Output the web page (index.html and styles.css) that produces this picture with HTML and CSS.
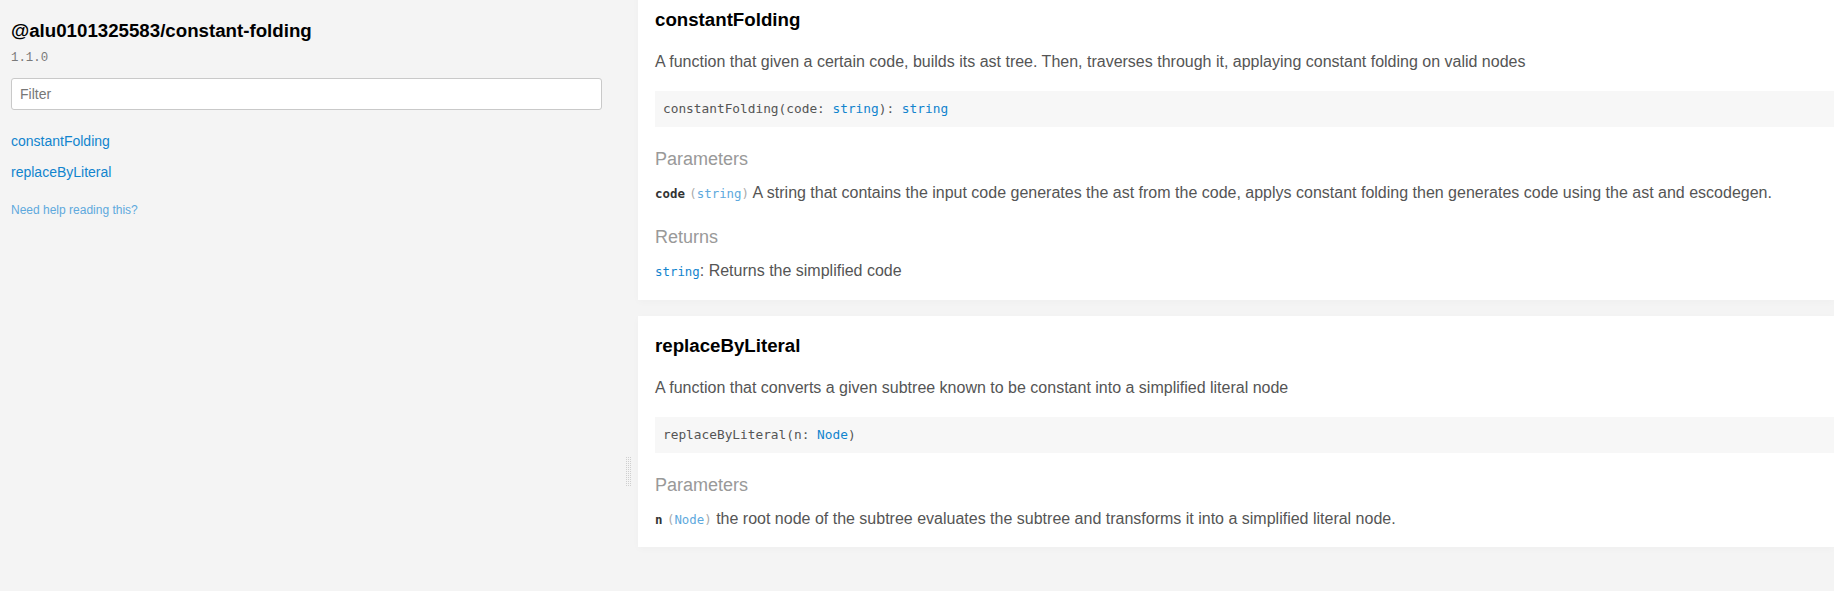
FILE: index.html
```html
<!DOCTYPE html>
<html lang="en">
<head>
<meta charset="utf-8">
<title>@alu0101325583/constant-folding 1.1.0 | Documentation</title>
<link rel="stylesheet" href="styles.css">
</head>
<body>
<div class="layout">
  <aside class="sidebar">
    <h3 class="pkg-title">@alu0101325583/constant-folding</h3>
    <div class="version">1.1.0</div>
    <input class="filter" type="text" placeholder="Filter">
    <ul class="toc">
      <li><a href="#constantfolding">constantFolding</a></li>
      <li><a href="#replacebyliteral">replaceByLiteral</a></li>
    </ul>
    <div class="help"><a href="#">Need help reading this?</a></div>
  </aside>
  <div class="gutter"><span class="grip"></span></div>
  <main class="content">
    <section class="card card-first" id="constantfolding">
      <h3 class="fn-title">constantFolding</h3>
      <p class="desc">A function that given a certain code, builds its ast tree. Then, traverses through it, applaying constant folding on valid nodes</p>
      <div class="sig">constantFolding(code: <a href="#">string</a>): <a href="#">string</a></div>
      <div class="section-label">Parameters</div>
      <div class="param"><span class="pname">code</span> <code class="ptype">(<a href="#">string</a>)</code> A string that contains the input code generates the ast from the code, applys constant folding then generates code using the ast and escodegen.</div>
      <div class="section-label">Returns</div>
      <div class="returns"><code class="rtype"><a href="#">string</a></code>: Returns the simplified code</div>
    </section>
    <section class="card" id="replacebyliteral">
      <h3 class="fn-title">replaceByLiteral</h3>
      <p class="desc">A function that converts a given subtree known to be constant into a simplified literal node</p>
      <div class="sig">replaceByLiteral(n: <a href="#">Node</a>)</div>
      <div class="section-label">Parameters</div>
      <div class="param"><span class="pname">n</span> <code class="ptype">(<a href="#">Node</a>)</code> the root node of the subtree evaluates the subtree and transforms it into a simplified literal node.</div>
    </section>
  </main>
</div>
</body>
</html>
```

FILE: styles.css
```css
html, body {
  margin: 0;
  padding: 0;
  height: 100%;
}
body {
  background: #f4f4f4;
  font-family: "Liberation Sans", Arial, Helvetica, sans-serif;
  color: #555;
  overflow: hidden;
}
.layout {
  display: flex;
  height: 591px;
}
.sidebar {
  width: 623px;
  flex: none;
  box-sizing: border-box;
  padding: 19px 21px 0 11px;
}
.pkg-title {
  margin: 0;
  font-size: 18.7px;
  line-height: 24px;
  font-weight: bold;
  color: #000;
}
.version {
  margin-top: 6px;
  font-family: "Liberation Mono", "DejaVu Sans Mono", monospace;
  font-size: 12.4px;
  line-height: 18px;
  color: #7a7a7a;
}
.filter {
  display: block;
  box-sizing: border-box;
  width: 100%;
  height: 32px;
  margin-top: 11px;
  padding: 0 8px;
  border: 1px solid #c9c9c9;
  border-radius: 3px;
  background: #fff;
  font-family: "Liberation Sans", Arial, sans-serif;
  font-size: 14px;
  color: #333;
}
.filter::placeholder {
  color: #777;
}
.toc {
  list-style: none;
  margin: 21px 0 0;
  padding: 0;
  font-size: 14px;
  line-height: 20px;
}
.toc li + li {
  margin-top: 11px;
}
.toc a {
  color: #1184ce;
  text-decoration: none;
}
.help {
  margin-top: 20px;
  font-size: 12px;
  line-height: 16px;
}
.help a {
  color: #5ea9dd;
  text-decoration: none;
}
.gutter {
  width: 10px;
  flex: none;
  display: flex;
  flex-direction: column;
  align-items: center;
}
.grip {
  display: block;
  width: 5px;
  height: 30px;
  margin-top: 457px;
  background-image:
    repeating-linear-gradient(0deg, #f4f4f4 0 1px, transparent 1px 2px),
    repeating-linear-gradient(90deg, #cfcfcf 0 1px, #f4f4f4 1px 2px);
}
.content {
  flex: 1;
  min-width: 0;
  overflow: hidden;
}
.card {
  background: #fff;
  margin: 0 0 16px 5px;
  padding: 18px 0 16px 17px;
  box-shadow: 0 2px 8px rgba(0, 0, 0, 0.025);
}
.card-first {
  margin-top: -10px;
}
.fn-title {
  margin: 0;
  font-size: 18.7px;
  line-height: 24px;
  font-weight: bold;
  color: #000;
}
.desc {
  margin: 17px 0 16px;
  font-size: 16px;
  line-height: 26px;
}
.sig {
  background: #f7f7f7;
  padding: 8px;
  font-family: "DejaVu Sans Mono", "Liberation Mono", monospace;
  font-size: 12.8px;
  line-height: 20px;
  color: #555;
}
.sig a {
  color: #1184ce;
  text-decoration: none;
}
.section-label {
  margin-top: 10px;
  padding: 9px 0 8px;
  font-size: 18px;
  line-height: 27px;
  color: #999;
}
.param, .returns {
  font-size: 16px;
  line-height: 24px;
}
.returns {
  margin-bottom: 1px;
}
.pname, .ptype, .rtype {
  font-family: "DejaVu Sans Mono", "Liberation Mono", monospace;
  font-size: 12.4px;
  line-height: 1;
}
.pname {
  font-weight: bold;
  color: #333;
}
.ptype {
  color: #aaa;
}
.ptype a {
  color: #5ea9dd;
  text-decoration: none;
}
.rtype a {
  color: #1184ce;
  text-decoration: none;
}
```
